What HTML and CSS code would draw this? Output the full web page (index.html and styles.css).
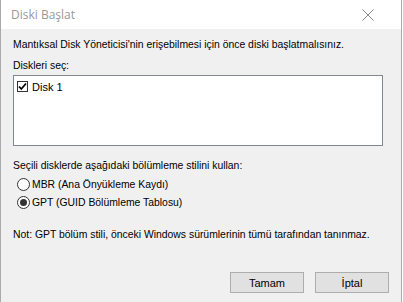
FILE: index.html
```html
<!DOCTYPE html>
<html>
  <head>
    <title>Diski Başlat</title>
    <link rel="stylesheet" href="styles.css">
  </head>
  <body>
    <div class="window">
      <div class="titlebar">
        <span class="title">Diski Başlat</span>
        <svg class="close" width="12" height="12" viewBox="0 0 12 12">
          <path d="M0.5 0.5 L11.5 11.5 M11.5 0.5 L0.5 11.5" stroke="#8a8a8a" stroke-width="1" fill="none" />
        </svg>
      </div>

      <div class="content">
        <p class="intro">Mantıksal Disk Yöneticisi'nin erişebilmesi için önce diski başlatmalısınız.</p>
        <p class="label">Diskleri seç:</p>

        <div class="disk-list">
          <label class="disk-item">
            <span class="check">
              <svg width="9" height="9" viewBox="0 0 9 9">
                <path d="M1 4.5 L3.3 7 L8 1.5" stroke="#000" stroke-width="1.8" fill="none" />
              </svg>
            </span>
            Disk 1
          </label>
        </div>

        <p class="label style-label">Seçili disklerde aşağıdaki bölümleme stilini kullan:</p>
        <label class="radio-row"><span class="radio"></span>MBR (Ana Önyükleme Kaydı)</label>
        <label class="radio-row"><span class="radio checked"></span>GPT (GUID Bölümleme Tablosu)</label>

        <p class="note">Not: GPT bölüm stili, önceki Windows sürümlerinin tümü tarafından tanınmaz.</p>

        <div class="buttons">
          <button class="btn">Tamam</button>
          <button class="btn">İptal</button>
        </div>
      </div>
    </div>
  </body>
</html>
```

FILE: styles.css
```css
body {
  margin: 0;
  background-color: #fff;
  font-family: "Liberation Sans", Arial, sans-serif;
  font-size: 10.4px;
  color: #000;
}

.window {
  width: 400px;
  height: 302px;
  border-left: 1px solid #aaa;
  border-right: 1px solid #aaa;
  display: flex;
  flex-direction: column;
  background-color: #f0f0f0;
}

.titlebar {
  height: 29px;
  background-color: #fff;
  display: flex;
  align-items: center;
  justify-content: space-between;
  padding: 0 27px 0 10px;
  flex-shrink: 0;
}

.title {
  font-family: "Open Sans", "Noto Sans", sans-serif;
  font-size: 12px;
  color: #999;
}

.content {
  padding: 0 0 0 12px;
  display: flex;
  flex-direction: column;
}

p {
  margin: 0;
  line-height: 13px;
}

.intro {
  margin-top: 9px;
}

.label {
  margin-top: 8px;
}

.disk-list {
  width: 370px;
  height: 71px;
  margin-top: 3px;
  background-color: #fff;
  border: 1px solid #828790;
  box-sizing: border-box;
}

.disk-item {
  display: flex;
  align-items: center;
  gap: 4px;
  padding: 4px 0 0 3px;
  height: 13px;
  font-size: 11px;
}

.check {
  width: 11px;
  height: 11px;
  box-sizing: border-box;
  border: 1px solid #333;
  background-color: #fff;
  display: flex;
  align-items: center;
  justify-content: center;
}

.style-label {
  margin-top: 13px;
}

.radio-row {
  display: flex;
  align-items: center;
  gap: 2px;
  margin-top: 6px;
  padding-left: 4px;
  height: 13px;
}

.radio-row + .radio-row {
  margin-top: 5px;
}

.radio {
  width: 13px;
  height: 13px;
  box-sizing: border-box;
  border: 1px solid #333;
  border-radius: 50%;
  background-color: #fff;
  display: flex;
  align-items: center;
  justify-content: center;
}

.radio.checked::after {
  content: "";
  width: 7px;
  height: 7px;
  border-radius: 50%;
  background-color: #333;
}

.note {
  margin-top: 19px;
}

.buttons {
  display: flex;
  gap: 11px;
  margin-top: 31px;
  padding-left: 217px;
}

.btn {
  width: 74px;
  height: 21px;
  background-color: #e1e1e1;
  border: 1px solid #adadad;
  font-family: "Liberation Sans", Arial, sans-serif;
  font-size: 11px;
  color: #000;
  padding: 0;
}
```
